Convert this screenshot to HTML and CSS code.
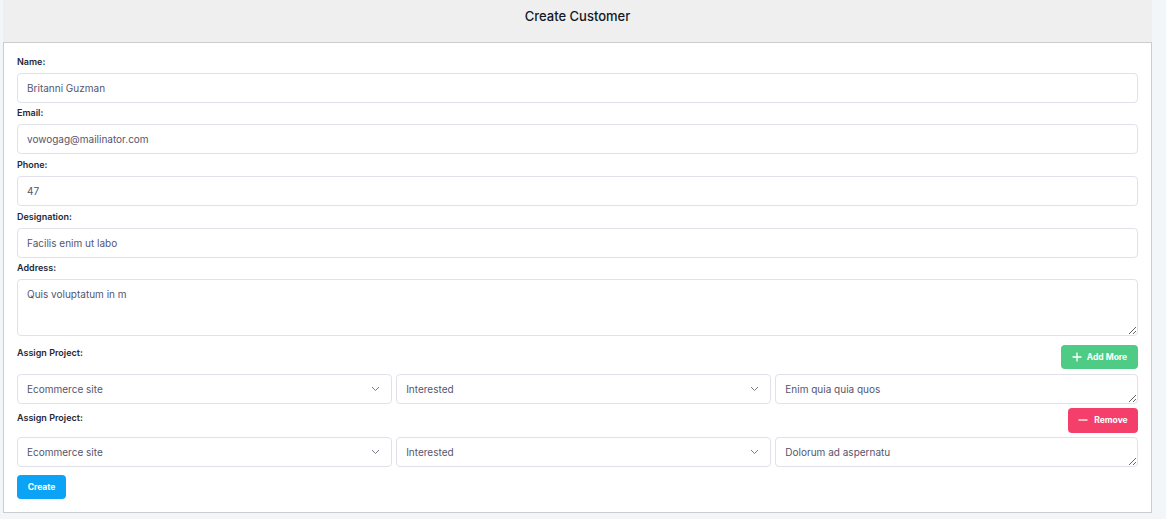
FILE: index.html
```html
<!DOCTYPE html>
<html>
<head>
<meta charset="utf-8">
<link rel="stylesheet" href="styles.css">
</head>
<body>
<div class="page">
  <header class="topbar"><h1 class="title">Create Customer</h1></header>
  <form class="card">
    <label class="label">Name:</label>
    <input class="input" type="text" value="Britanni Guzman">
    <label class="label">Email:</label>
    <input class="input" type="text" value="vowogag@mailinator.com">
    <label class="label">Phone:</label>
    <input class="input" type="text" value="47">
    <label class="label">Designation:</label>
    <input class="input" type="text" value="Facilis enim ut labo">
    <label class="label">Address:</label>
    <textarea class="input textarea">Quis voluptatum in m</textarea>

    <div class="project-head first">
      <span class="label inline">Assign Project:</span>
      <button type="button" class="btn btn-add">
        <svg width="10" height="10" viewBox="0 0 10 10"><path d="M5 0.5v9M0.5 5h9" stroke="#fff" stroke-width="1.3"/></svg>
        Add More
      </button>
    </div>
    <div class="project-row">
      <div class="select"><span>Ecommerce site</span><svg class="chev" width="9" height="6" viewBox="0 0 9 6"><path d="M1 1l3.5 3.5L8 1" fill="none" stroke="#7b7b8a" stroke-width="1"/></svg></div>
      <div class="select"><span>Interested</span><svg class="chev" width="9" height="6" viewBox="0 0 9 6"><path d="M1 1l3.5 3.5L8 1" fill="none" stroke="#7b7b8a" stroke-width="1"/></svg></div>
      <textarea class="input note">Enim quia quia quos</textarea>
    </div>

    <div class="project-head second">
      <span class="label inline">Assign Project:</span>
      <button type="button" class="btn btn-remove">
        <svg width="10" height="10" viewBox="0 0 10 10"><path d="M0.5 5h9" stroke="#fff" stroke-width="1.3"/></svg>
        Remove
      </button>
    </div>
    <div class="project-row">
      <div class="select"><span>Ecommerce site</span><svg class="chev" width="9" height="6" viewBox="0 0 9 6"><path d="M1 1l3.5 3.5L8 1" fill="none" stroke="#7b7b8a" stroke-width="1"/></svg></div>
      <div class="select"><span>Interested</span><svg class="chev" width="9" height="6" viewBox="0 0 9 6"><path d="M1 1l3.5 3.5L8 1" fill="none" stroke="#7b7b8a" stroke-width="1"/></svg></div>
      <textarea class="input note">Dolorum ad aspernatu</textarea>
    </div>

    <div class="actions">
      <button type="button" class="btn btn-create">Create</button>
    </div>
  </form>
</div>
</body>
</html>
```
FILE: styles.css
```css
* { box-sizing: border-box; }
html, body { margin: 0; padding: 0; }
body {
  background: #f3f6f9;
  font-family: Inter, "Noto Sans", sans-serif;
  color: #1f2937;
}
.page {
  width: 1149px;
  margin-left: 3px;
}
.topbar {
  height: 42px;
  background: #efefef;
  display: flex;
  align-items: center;
  justify-content: center;
}
.title {
  margin: 0;
  font-size: 13px;
  font-weight: 500;
  color: #111827;
  line-height: 16px;
  padding-bottom: 10px;
}
.card {
  background: #fff;
  border: 1px solid #cccccc;
  padding: 8px 13px 13px 13px;
  display: flex;
  flex-direction: column;
}
.label {
  display: block;
  font-size: 9px;
  font-weight: 600;
  line-height: 12px;
  padding: 4.67px 0 5px 0;
  color: #1f2937;
}
.input {
  display: block;
  width: 100%;
  height: 30px;
  border: 1px solid #e1e1ea;
  border-radius: 4px;
  padding: 0 9px;
  font-family: Inter, "Noto Sans", sans-serif;
  font-size: 10px;
  color: #55556e;
  background: #fff;
  outline: none;
  margin: 0;
}
.textarea {
  height: 57px;
  padding-top: 8px;
  resize: vertical;
  line-height: 13px;
}
.project-head {
  display: flex;
  justify-content: space-between;
  align-items: flex-start;
}
.project-head.first { padding-top: 9px; height: 37.33px; }
.project-head.first .inline { padding: 1.5px 0 0 0; }
.project-head.second { padding-top: 4px; height: 33px; }
.project-head.second .inline { padding: 4.5px 0 0 0; }
.btn {
  border: none;
  border-radius: 4px;
  color: #fff;
  font-family: Inter, "Noto Sans", sans-serif;
  font-size: 8.5px;
  font-weight: 700;
  display: inline-flex;
  align-items: center;
  justify-content: center;
  gap: 5px;
  cursor: pointer;
  padding: 0;
}
.btn-add {
  background: #4ecb85;
  width: 77px;
  height: 24px;
}
.btn-remove {
  background: #f43f6b;
  width: 70px;
  height: 25px;
  gap: 6px;
}
.project-row {
  display: grid;
  grid-template-columns: 375fr 375fr 363fr;
  gap: 4.5px;
}
.select {
  height: 30px;
  border: 1px solid #e1e1ea;
  border-radius: 4px;
  display: flex;
  align-items: center;
  justify-content: space-between;
  padding: 0 11px 0 9px;
  font-size: 10px;
  color: #55556e;
}
.chev { display: block; }
.note {
  height: 30px;
  padding-top: 8px;
  resize: vertical;
  line-height: 13px;
}
.actions { padding-top: 7.5px; }
.btn-create {
  background: #0aa3f5;
  width: 49px;
  height: 24px;
}
```
